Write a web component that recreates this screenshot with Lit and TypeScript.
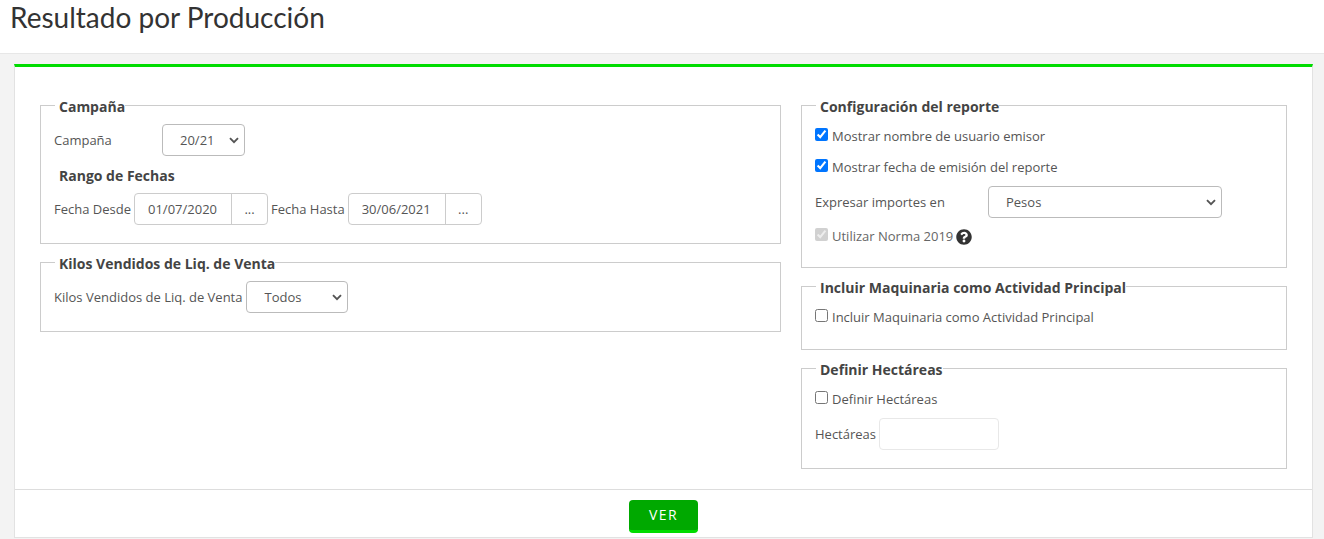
import { LitElement, html, css, svg } from "lit";
import { customElement } from "lit/decorators.js";

const helpIcon = svg`<path fill="currentColor" d="M504 256c0 136.997-111.043 248-248 248S8 392.997 8 256C8 119.083 119.043 8 256 8s248 111.083 248 248zM262.655 90c-54.497 0-89.255 22.957-116.549 63.758-3.536 5.286-2.353 12.415 2.715 16.258l34.699 26.31c5.205 3.947 12.621 3.008 16.665-2.122 17.864-22.658 30.113-35.797 57.303-35.797 20.429 0 45.698 13.148 45.698 32.958 0 14.976-12.363 22.667-32.534 33.976C247.128 238.528 216 254.941 216 296v4c0 6.627 5.373 12 12 12h56c6.627 0 12-5.373 12-12v-1.333c0-28.462 83.186-29.647 83.186-106.667 0-58.002-60.165-102-116.531-102zM256 338c-25.365 0-46 20.635-46 46 0 25.364 20.635 46 46 46s46-20.636 46-46c0-25.365-20.635-46-46-46z"/>`;

@customElement("app-root")
export class AppRoot extends LitElement {
  static styles = css`
    :host { display: block; background: #f3f3f3; height: 539px; overflow: hidden; font-family: "Open Sans", sans-serif; font-size: 13px; color: #555; }
    * { box-sizing: border-box; }
    .header { height: 54px; background: #fff; border-bottom: 1px solid #e7e7e7; padding: 0 10px; }
    h1 { margin: 0; font: 400 28px/35px Lato, sans-serif; color: #333; }
    .card { margin: 10px 11px 0 14px; background: #fff; border: 1px solid #e2e2e2; border-top: 3px solid #00dc00; height: 474px; }
    .body { display: grid; grid-template-columns: 741px 486px; column-gap: 20px; padding: 27px 25px 0; height: 422px; align-items: start; }
    .col { display: flex; flex-direction: column; gap: 7px; }
    fieldset { margin: 0; border: 1px solid #ccc; padding: 0 13px; min-width: 0; }
    legend { margin-left: 1px; padding: 4px 0 0 4px; font-weight: 700; font-size: 14px; line-height: 18px; color: #444; }
    .row { display: flex; align-items: center; height: 32px; }
    .fs-campana { height: 150px; }
    .fs-kilos { height: 81px; }
    .fs-config { height: 174px; }
    .fs-maq { height: 75px; }
    .fs-hect { height: 112px; }
    .mt-campana { margin-top: 8px; }
    .mt-kilos { margin-top: 8px; }
    .sub { margin: 10px 0 8px 5px; font-weight: 700; font-size: 14px; line-height: 19px; color: #444; }
    .lab-campana { width: 108px; }
    .lab-importes { width: 173px; }
    .gap4 { margin-right: 4px; }
    select {
      appearance: none; height: 32px; border: 1px solid #bbb; border-radius: 4px; color: #555;
      font: 13px "Open Sans", sans-serif; padding: 0 16px 0 17px;
      background: #fff url("data:image/svg+xml,%3Csvg xmlns='http://www.w3.org/2000/svg' width='10' height='7'%3E%3Cpath d='M1 1.2l4 4 4-4' fill='none' stroke='%23555' stroke-width='1.9'/%3E%3C/svg%3E") no-repeat right 5px center;
    }
    .sel-campana { width: 83px; }
    .sel-kilos { width: 102px; }
    .sel-pesos { width: 234px; }
    .date { display: flex; height: 32px; width: 134px; border: 1px solid #ccc; border-radius: 4px; margin: 0 3px; }
    .date input { width: 97px; border: 0; border-right: 1px solid #ccc; border-radius: 4px 0 0 4px; padding: 0 0 0 13px; font: 13px "Open Sans", sans-serif; color: #555; background: transparent; outline: none; }
    .date button { flex: 1; border: 0; background: transparent; padding: 0; font: 13px "Open Sans", sans-serif; color: #555; }
    .check { display: flex; align-items: center; gap: 4px; height: 18px; }
    .check input { width: 13px; height: 13px; margin: 0 0 4px; flex: none; }
    .c1 { margin-top: 11px; }
    .c2 { margin-top: 13px; }
    .mt-pesos { margin-top: 10px; }
    .c3 { margin-top: 9px; }
    .muted { color: #666; }
    .help { width: 16px; height: 16px; color: #333; margin: 2px 0 0 -1px; flex: none; }
    .c4 { margin-top: 11px; }
    .mt-hect { margin-top: 10px; }
    .hect { width: 120px; height: 32px; margin-left: 3px; border: 1px solid #e8e8e8; border-radius: 4px; background: #fff; }
    .footer { border-top: 1px solid #ddd; height: 48px; display: flex; justify-content: center; padding-top: 10px; }
    .ver { width: 69px; height: 33px; border: 0; border-bottom: 3px solid #00dc00; border-radius: 4px; background: #00a900; color: #fff; font: 400 14px "Open Sans", sans-serif; letter-spacing: 1.4px; padding: 0 0 2px; }
  `;

  render() {
    return html`
      <div class="header"><h1>Resultado por Producción</h1></div>
      <div class="card">
        <div class="body">
          <div class="col">
            <fieldset class="fs-campana">
              <legend>Campaña</legend>
              <div class="row mt-campana">
                <span class="lab-campana">Campaña</span>
                <select class="sel-campana"><option>20/21</option></select>
              </div>
              <div class="sub">Rango de Fechas</div>
              <div class="row">
                <span>Fecha Desde</span>
                <div class="date"><input value="01/07/2020" /><button>...</button></div>
                <span>Fecha Hasta</span>
                <div class="date"><input value="30/06/2021" /><button>...</button></div>
              </div>
            </fieldset>
            <fieldset class="fs-kilos">
              <legend>Kilos Vendidos de Liq. de Venta</legend>
              <div class="row mt-kilos">
                <span class="gap4">Kilos Vendidos de Liq. de Venta</span>
                <select class="sel-kilos"><option>Todos</option></select>
              </div>
            </fieldset>
          </div>
          <div class="col">
            <fieldset class="fs-config">
              <legend>Configuración del reporte</legend>
              <label class="check c1"><input type="checkbox" checked />Mostrar nombre de usuario emisor</label>
              <label class="check c2"><input type="checkbox" checked />Mostrar fecha de emisión del reporte</label>
              <div class="row mt-pesos">
                <span class="lab-importes">Expresar importes en</span>
                <select class="sel-pesos"><option>Pesos</option></select>
              </div>
              <label class="check c3 muted"><input type="checkbox" checked disabled />Utilizar Norma 2019
                <svg class="help" viewBox="0 0 512 512">${helpIcon}</svg></label>
            </fieldset>
            <fieldset class="fs-maq">
              <legend>Incluir Maquinaria como Actividad Principal</legend>
              <label class="check c4"><input type="checkbox" />Incluir Maquinaria como Actividad Principal</label>
            </fieldset>
            <fieldset class="fs-hect">
              <legend>Definir Hectáreas</legend>
              <label class="check c4"><input type="checkbox" />Definir Hectáreas</label>
              <div class="row mt-hect">
                <span>Hectáreas</span>
                <input class="hect" />
              </div>
            </fieldset>
          </div>
        </div>
        <div class="footer"><button class="ver">VER</button></div>
      </div>
    `;
  }
}
